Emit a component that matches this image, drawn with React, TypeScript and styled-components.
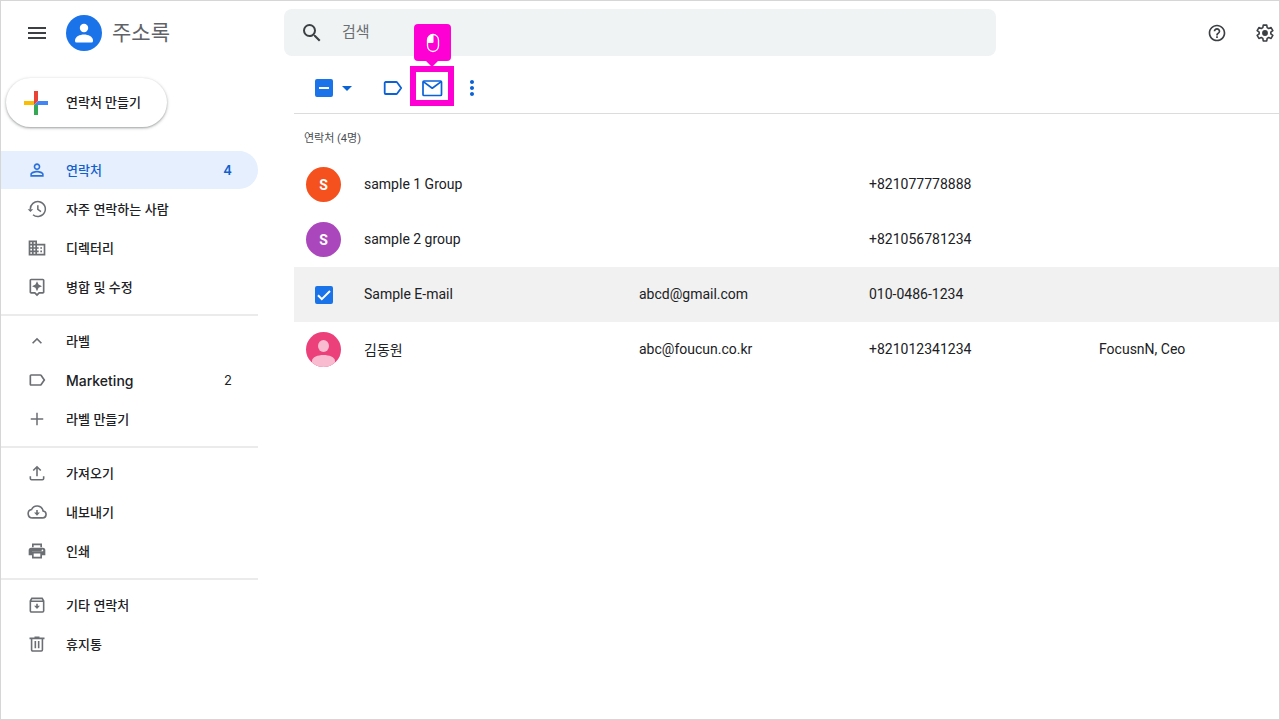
import React, { ReactNode, useEffect, useRef, useState } from 'react';
import styled, { createGlobalStyle, css } from 'styled-components';
import {
  MdMenu,
  MdSearch,
  MdHelpOutline,
  MdPersonOutline,
  MdOutlineAssistant,
  MdKeyboardArrowUp,
  MdLabelOutline,
  MdMoreVert,
  MdOutlineBusiness,
} from 'react-icons/md';

const GlobalStyle = createGlobalStyle`
  *, *::before, *::after { box-sizing: border-box; }
  body {
    margin: 0;
    background: #fff;
    color: #202124;
    font-family: Roboto, "Noto Sans CJK KR", sans-serif;
    font-size: 14px;
  }
  button, input { font: inherit; color: inherit; }
`;

const Page = styled.div`
  min-height: 100vh;
  border: 1px solid #d6d6d6;
  display: flex;
  flex-direction: column;
`;

const Header = styled.header`
  display: flex;
  align-items: center;
  height: 55px;
  padding-top: 8px;
`;

const Brand = styled.div`
  flex: none;
  width: 283px;
  display: flex;
  align-items: center;
  padding-left: 24px;
`;

const IconButton = styled.button`
  flex: none;
  display: flex;
  align-items: center;
  justify-content: center;
  width: 24px;
  height: 24px;
  padding: 0;
  border: 0;
  background: none;
  color: #3c4043;
  cursor: pointer;
`;

const Logo = styled.svg`
  width: 36px;
  height: 36px;
  margin-left: 17px;
`;

const Title = styled.h1`
  margin: 0 0 0 10px;
  font-size: 21px;
  line-height: 28px;
  font-weight: 400;
  color: #5f6368;
`;

const Search = styled.label`
  flex: 1;
  max-width: 712px;
  height: 47px;
  display: flex;
  align-items: center;
  gap: 18px;
  padding: 0 16px;
  border-radius: 8px;
  background: #eff3f4;
  color: #3c4043;
`;

const SearchInput = styled.input`
  flex: 1;
  min-width: 0;
  padding: 0 0 2px;
  border: 0;
  outline: 0;
  background: none;
  font-size: 15px;
  &::placeholder { color: #6b6f73; opacity: 1; }
`;

const HeaderActions = styled.div`
  display: flex;
  gap: 24px;
  margin-left: auto;
  padding-right: 2px;
`;

const Body = styled.div`
  flex: 1;
  display: flex;
`;

const Sidebar = styled.aside`
  flex: none;
  width: 257px;
  margin-right: 36px;
  padding-top: 22px;
`;

const CreateButton = styled.button`
  display: flex;
  align-items: center;
  gap: 18px;
  height: 49px;
  width: 161px;
  margin: 0 0 24px 5px;
  padding: 0 0 0 18px;
  border: 0;
  border-radius: 25px;
  background: #fff;
  box-shadow: 0 1px 2px rgba(60, 64, 67, 0.35), 0 1px 3px 1px rgba(60, 64, 67, 0.15);
  font-size: 13px;
  font-weight: 500;
  white-space: nowrap;
  cursor: pointer;
`;

const CreateLabel = styled.span`
  padding-bottom: 2px;
`;

const NavSection = styled.ul`
  list-style: none;
  margin: 0;
  padding: 0 0 8px;
  display: flex;
  flex-direction: column;
  gap: 1px;
  & + & {
    padding-top: 6px;
    border-top: 2px solid #ebebeb;
  }
`;

const NavLink = styled.a<{ $active?: boolean }>`
  display: flex;
  align-items: center;
  height: 38px;
  padding: 0 26px 0 26px;
  border-radius: 0 19px 19px 0;
  color: #202124;
  font-family: Inter, "Noto Sans CJK KR", sans-serif;
  font-size: 13px;
  font-weight: 500;
  text-decoration: none;
  svg { flex: none; width: 20px; height: 20px; color: #6b6e72; }
  ${({ $active }) => $active && css`
    background: #e6effe;
    color: #1260cc;
    svg { color: #2a70d8; }
  `}
`;

const NavLabel = styled.span<{ $latin: boolean }>`
  flex: 1;
  margin-left: 19px;
  padding-bottom: ${({ $latin }) => ($latin ? 0 : 2)}px;
  font-size: ${({ $latin }) => ($latin ? 14 : 13)}px;
`;

const Count = styled.span<{ $strong?: boolean }>`
  font-weight: ${({ $strong }) => ($strong ? 600 : 400)};
`;

const Main = styled.main`
  flex: 1;
  min-width: 0;
`;

const Toolbar = styled.div`
  display: flex;
  align-items: center;
  height: 58px;
  padding: 7px 0 0 21px;
  border-bottom: 1px solid #dcdcdc;
`;

const ToolButton = styled(IconButton)<{ $gap: number }>`
  position: relative;
  margin-left: ${({ $gap }) => $gap}px;
  color: #0b62d6;
`;

const CheckLabel = styled.label`
  position: relative;
  display: block;
  width: 18px;
  height: 18px;
  svg {
    position: absolute;
    inset: 0;
    pointer-events: none;
  }
`;

const CheckInput = styled.input`
  appearance: none;
  display: block;
  width: 18px;
  height: 18px;
  margin: 0;
  border: 2px solid #1a73e8;
  border-radius: 2px;
  &:checked, &:indeterminate { background: #1a73e8; }
  &:not(:checked):not(:indeterminate) + svg { display: none; }
`;

const Highlight = styled.span`
  position: absolute;
  left: -10px;
  top: -10px;
  width: 44px;
  height: 40px;
  border: 6px solid #ff00d4;
`;

const ClickBadge = styled.span`
  position: absolute;
  left: -6px;
  top: -52px;
  width: 37px;
  height: 37px;
  display: flex;
  align-items: center;
  justify-content: center;
  border-radius: 4px;
  background: #ff00d4;
  &::after {
    content: "";
    position: absolute;
    top: 100%;
    left: 12px;
    border: 6px solid transparent;
    border-top-color: #ff00d4;
    border-bottom: 0;
  }
`;

const ListTitle = styled.h2`
  margin: 16px 0 9px 10px;
  font-size: 11px;
  line-height: 18px;
  font-weight: 400;
  color: #4b4e52;
`;

const ContactTable = styled.table`
  width: 100%;
  table-layout: fixed;
  border-collapse: collapse;
`;

const Col = styled.col<{ $width?: number }>`
  width: ${({ $width }) => ($width ? `${$width}px` : 'auto')};
`;

const ContactRow = styled.tr<{ $selected: boolean }>`
  height: 55px;
  background: ${({ $selected }) => ($selected ? '#f1f1f1' : 'transparent')};
`;

const Cell = styled.td`
  padding: 0 0 2px;
  white-space: nowrap;
`;

const MarkCell = styled.td`
  padding: 0 0 0 12px;
`;

const MarkBox = styled.div`
  width: 35px;
  display: flex;
  justify-content: center;
`;

const Avatar = styled.div<{ $color: string }>`
  width: 35px;
  height: 35px;
  display: flex;
  align-items: center;
  justify-content: center;
  overflow: hidden;
  border-radius: 50%;
  background: ${({ $color }) => $color};
  color: #fff;
  font-size: 14px;
  font-weight: 700;
`;

function Line({ children, width = 1.6 }: { children: ReactNode; width?: number }) {
  return (
    <svg viewBox="0 0 24 24" width="20" height="20" fill="none" stroke="currentColor" strokeWidth={width} aria-hidden="true">
      {children}
    </svg>
  );
}

const PlusIcon = () => <Line width={1.8}><path d="M12 4.5v15M4.5 12h15" /></Line>;

const HistoryIcon = () => (
  <Line width={1.8}>
    <path d="M4 12.500A9 9 0 1 1 7.200 18.900" />
    <path d="M.8 12.200h6.600L4.100 15.500Z" fill="currentColor" stroke="none" />
    <path d="M13 7.500v5l3.800 2.600" />
  </Line>
);

const UploadIcon = () => (
  <Line width={1.9}>
    <path d="M12 16V5M7.5 9 12 4.5 16.500 9M4 16v2.500a1.500 1.500 0 0 0 1.500 1.500h13a1.500 1.500 0 0 0 1.500-1.500V16" />
  </Line>
);

const CloudIcon = () => (
  <Line width={1.9}>
    <path d="M6.500 19.100h12.300a4.200 4.200 0 0 0 .5-8.350A7.300 7.300 0 0 0 5.500 9a5.100 5.100 0 0 0 1 10.100Z" />
    <path d="M12 9.500v4" />
    <path d="M8.500 12.500h7L12 16.400Z" fill="currentColor" stroke="none" />
  </Line>
);

const PrintIcon = () => (
  <Line width={2}>
    <path d="M7 7.500V4h10v3.500M7 14v6h10v-6Z" />
    <path
      d="M5 8h14a3 3 0 0 1 3 3v6h-4v-4H6v4H2v-6a3 3 0 0 1 3-3Zm13.500 2.300a1 1 0 1 0 0 2 1 1 0 0 0 0-2Z"
      fill="currentColor"
      stroke="none"
    />
  </Line>
);

const ArchiveIcon = () => (
  <Line width={1.9}>
    <path d="M4 7.200 5.800 4h12.400L20 7.200V19a1.300 1.300 0 0 1-1.300 1.300H5.300A1.300 1.300 0 0 1 4 19ZM4 7.500h16M12 10.500v3.500" />
    <path d="M8.500 13h7L12 16.900Z" fill="currentColor" stroke="none" />
  </Line>
);

const TrashIcon = () => (
  <Line width={1.9}>
    <path d="M3 5.200h18M9 3.800h6M5.500 5.500V19a1.300 1.300 0 0 0 1.300 1.300h10.400a1.300 1.300 0 0 0 1.300-1.300V5.500M10 8.500v8.500M14 8.500v8.500" />
  </Line>
);

const LabelToolIcon = () => (
  <svg viewBox="0 0 20 16" width="20" height="16" fill="none" stroke="currentColor" strokeWidth="1.8" strokeLinejoin="round" aria-hidden="true">
    <path d="M2.700 2h10.500a1.200 1.200 0 0 1 1 .5L18.200 8l-4 5.500a1.200 1.200 0 0 1-1 .5H2.700a1 1 0 0 1-1-1V3a1 1 0 0 1 1-1Z" />
  </svg>
);

const MailIcon = () => (
  <svg viewBox="0 0 24 24" width="24" height="24" fill="none" stroke="currentColor" strokeWidth="1.7" strokeLinejoin="round" aria-hidden="true">
    <rect x="3" y="5" width="18.500" height="14.500" rx="1" />
    <path d="m3.300 5.600 8.950 6.600 8.950-6.600" />
  </svg>
);

const GearIcon = () => (
  <svg viewBox="0 0 24 24" width="20" height="20" aria-hidden="true">
    <path
      d="M9.900 2.500h4.200l.5 3 1.900 1.100 2.800-1.100 2.100 3.600-2.400 1.800v2.200l2.400 1.800-2.100 3.600-2.800-1.100-1.900 1.100-.5 3H9.900l-.5-3-1.900-1.100-2.800 1.100-2.100-3.600L5 13.100v-2.200L2.600 9.100l2.100-3.600 2.800 1.100 1.900-1.100Z"
      fill="none"
      stroke="currentColor"
      strokeWidth="1.9"
      strokeLinejoin="round"
    />
    <circle cx="12" cy="12" r="3.500" fill="currentColor" />
  </svg>
);

const ColorPlus = () => (
  <svg viewBox="0 0 24 24" width="24" height="24" aria-hidden="true">
    <path d="M10 0h4v10l-4 4Z" fill="#ea4335" />
    <path d="M0 10h10v4H0Z" fill="#fbbc04" />
    <path d="M10 14h4v10h-4Z" fill="#34a853" />
    <path d="M14 10h10v4H10Z" fill="#4285f4" />
  </svg>
);

const MouseIcon = () => (
  <svg viewBox="0 0 14 20" width="14" height="20" aria-hidden="true">
    <path d="M7 1.500A5.500 5.500 0 0 0 1.500 7v3H7Z" fill="#fff" />
    <rect x="1.500" y="1.500" width="11" height="17" rx="5.500" fill="none" stroke="#fff" strokeWidth="1.3" />
    <path d="M1.500 9.500H7V1.500" fill="none" stroke="#fff" strokeWidth="1" />
  </svg>
);

interface CheckboxProps {
  label: string;
  mixed?: boolean;
}

function Checkbox({ label, mixed = false }: CheckboxProps) {
  const ref = useRef<HTMLInputElement>(null);
  const [checked, setChecked] = useState(!mixed);
  useEffect(() => {
    if (ref.current) ref.current.indeterminate = mixed;
  }, [mixed]);
  return (
    <CheckLabel>
      <CheckInput ref={ref} type="checkbox" aria-label={label} checked={checked} onChange={(e) => setChecked(e.target.checked)} />
      <svg viewBox="0 0 18 18" width="18" height="18" fill="none" stroke="#fff" strokeWidth="2" aria-hidden="true">
        <path d={mixed ? 'M4 9h10' : 'm3 9.300 3.800 3.900L15 5'} />
      </svg>
    </CheckLabel>
  );
}

interface NavEntry {
  label: string;
  icon: ReactNode;
  count?: number;
  active?: boolean;
  latin?: boolean;
}

const sections: NavEntry[][] = [
  [
    { label: '연락처', icon: <MdPersonOutline />, count: 4, active: true },
    { label: '자주 연락하는 사람', icon: <HistoryIcon /> },
    { label: '디렉터리', icon: <MdOutlineBusiness /> },
    { label: '병합 및 수정', icon: <MdOutlineAssistant /> },
  ],
  [
    { label: '라벨', icon: <MdKeyboardArrowUp /> },
    { label: 'Marketing', icon: <MdLabelOutline />, count: 2, latin: true },
    { label: '라벨 만들기', icon: <PlusIcon /> },
  ],
  [
    { label: '가져오기', icon: <UploadIcon /> },
    { label: '내보내기', icon: <CloudIcon /> },
    { label: '인쇄', icon: <PrintIcon /> },
  ],
  [
    { label: '기타 연락처', icon: <ArchiveIcon /> },
    { label: '휴지통', icon: <TrashIcon /> },
  ],
];

interface Contact {
  name: string;
  email?: string;
  phone: string;
  job?: string;
  color: string;
  initial?: string;
  selected?: boolean;
}

const contacts: Contact[] = [
  { name: 'sample 1 Group', phone: '+821077778888', color: '#f4511e', initial: 'S' },
  { name: 'sample 2 group', phone: '+821056781234', color: '#ab47bc', initial: 'S' },
  { name: 'Sample E-mail', email: 'abcd@gmail.com', phone: '010-0486-1234', color: '#1a73e8', selected: true },
  { name: '김동원', email: 'abc@foucun.co.kr', phone: '+821012341234', job: 'FocusnN, Ceo', color: '#ec407a' },
];

function ContactMark({ contact }: { contact: Contact }) {
  if (contact.selected) return <Checkbox label={`${contact.name} 선택`} />;
  return (
    <Avatar $color={contact.color}>
      {contact.initial ?? (
        <svg viewBox="0 0 35 35" width="35" height="35" fill="#f8bbd0" aria-hidden="true">
          <ellipse cx="17.500" cy="14" rx="5.500" ry="6" />
          <path d="M6 35v-6c0-4 6-6 11.500-6S29 25 29 29v6Z" />
        </svg>
      )}
    </Avatar>
  );
}

export default function App() {
  return (
    <Page>
      <GlobalStyle />
      <Header>
        <Brand>
          <IconButton aria-label="메뉴"><MdMenu size={24} /></IconButton>
          <Logo viewBox="0 0 36 36" aria-hidden="true">
            <circle cx="18" cy="18" r="18" fill="#1a73e8" />
            <circle cx="18" cy="13" r="4.200" fill="#fff" />
            <path d="M9 25.500c0-4 5-6 9-6s9 2 9 6V26a1.500 1.500 0 0 1-1.500 1.500h-15A1.500 1.500 0 0 1 9 26Z" fill="#fff" />
          </Logo>
          <Title>주소록</Title>
        </Brand>
        <Search>
          <MdSearch size={24} />
          <SearchInput type="search" placeholder="검색" aria-label="검색" />
        </Search>
        <HeaderActions>
          <IconButton aria-label="도움말"><MdHelpOutline size={20} /></IconButton>
          <IconButton aria-label="설정"><GearIcon /></IconButton>
        </HeaderActions>
      </Header>
      <Body>
        <Sidebar>
          <CreateButton><ColorPlus /><CreateLabel>연락처 만들기</CreateLabel></CreateButton>
          <nav>
            {sections.map((entries) => (
              <NavSection key={entries[0].label}>
                {entries.map((entry) => (
                  <li key={entry.label}>
                    <NavLink href="#" $active={entry.active}>
                      {entry.icon}
                      <NavLabel $latin={!!entry.latin}>{entry.label}</NavLabel>
                      {entry.count && <Count $strong={entry.active}>{entry.count}</Count>}
                    </NavLink>
                  </li>
                ))}
              </NavSection>
            ))}
          </nav>
        </Sidebar>
        <Main>
          <Toolbar>
            <Checkbox label="전체 선택" mixed />
            <ToolButton $gap={2} aria-label="선택 옵션">
              <svg viewBox="0 0 10 5" width="10" height="5" aria-hidden="true"><path d="M0 0h10L5 5Z" fill="currentColor" /></svg>
            </ToolButton>
            <ToolButton $gap={22} aria-label="라벨 관리"><LabelToolIcon /></ToolButton>
            <ToolButton $gap={15} aria-label="이메일 보내기">
              <MailIcon />
              <Highlight />
              <ClickBadge><MouseIcon /></ClickBadge>
            </ToolButton>
            <ToolButton $gap={16} aria-label="추가 작업"><MdMoreVert size={24} /></ToolButton>
          </Toolbar>
          <ListTitle>연락처 (4명)</ListTitle>
          <ContactTable>
            <colgroup>
              <Col $width={70} />
              <Col $width={275} />
              <Col $width={230} />
              <Col $width={230} />
              <Col />
            </colgroup>
            <tbody>
              {contacts.map((contact) => (
                <ContactRow key={contact.name} $selected={!!contact.selected}>
                  <MarkCell><MarkBox><ContactMark contact={contact} /></MarkBox></MarkCell>
                  <Cell>{contact.name}</Cell>
                  <Cell>{contact.email}</Cell>
                  <Cell>{contact.phone}</Cell>
                  <Cell>{contact.job}</Cell>
                </ContactRow>
              ))}
            </tbody>
          </ContactTable>
        </Main>
      </Body>
    </Page>
  );
}
